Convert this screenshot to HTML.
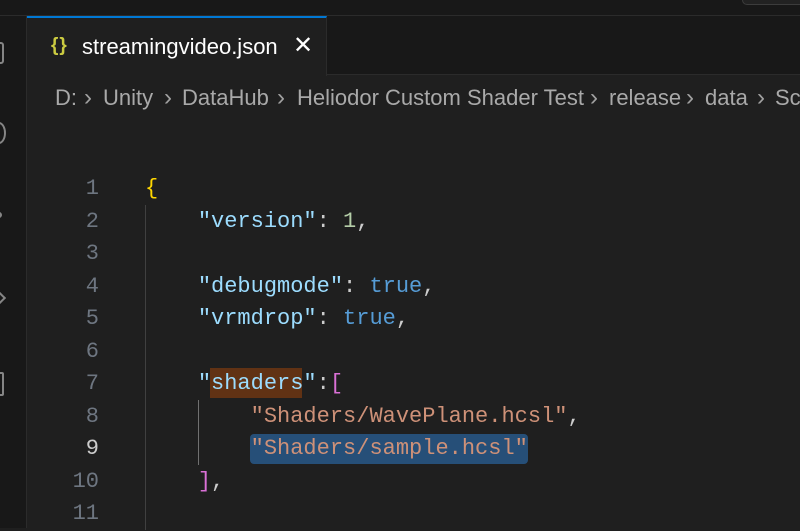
<!DOCTYPE html>
<html><head><style>
*{margin:0;padding:0;box-sizing:border-box}
body{width:800px;height:528px;background:#1f1f1f;overflow:hidden;position:relative;font-family:"Liberation Sans",sans-serif}
.top{position:absolute;left:0;top:0;width:800px;height:16px;background:#181818;border-bottom:1px solid #2b2b2b}
.act{position:absolute;left:0;top:16px;width:27px;height:512px;background:#181818;border-right:1px solid #2b2b2b}
.tabbar{position:absolute;left:27px;top:16px;width:773px;height:59px;background:#181818;border-bottom:1px solid #2b2b2b}
.tab{position:absolute;left:27px;top:16px;width:300px;height:60px;background:#1f1f1f;border-top:2px solid #0078d4;border-right:1px solid #2b2b2b}
.tab .ic{position:absolute;left:24px;top:17px;color:#cbcb41;font-size:19px;font-weight:bold;letter-spacing:1px}
.tab .nm{position:absolute;left:55px;top:16px;color:#fff;font-size:22px}
.tab .x{position:absolute;left:266px;top:13px;color:#fff;font-size:24px}
.bc{position:absolute;top:85px;color:#a9a9a9;font-size:22px;white-space:nowrap}
.ch{position:absolute;top:84px;color:#a0a0a0;font-size:24px}
.code{position:absolute;left:0;top:173px;font-family:"Liberation Mono",monospace;font-size:22px}
.ln{position:absolute;left:40px;width:59px;text-align:right;color:#6e7681;height:32.5px;line-height:32.5px}
.l{position:absolute;left:145px;white-space:pre;height:32.5px;line-height:32.5px;color:#ccc}
.k{color:#9cdcfe}.s{color:#ce9178}.n{color:#b5cea8}.b{color:#569cd6}.y{color:#ffd700}.p{color:#da70d6}
.guide{position:absolute;width:1px;background:#404040}
</style></head><body>
<div class="top"></div>
<div style="position:absolute;left:742px;top:-6px;width:70px;height:11px;border:1px solid #3c3c3c;border-radius:5px;background:#222"></div>
<div class="act"></div>
<div style="position:absolute;left:-6px;top:42px;width:10px;height:22px;border:2px solid #858585;border-radius:3px"></div>
<div style="position:absolute;left:-8px;top:122px;width:14px;height:22px;border:2px solid #858585;border-radius:50%"></div>
<div style="position:absolute;left:-4px;top:212px;width:6px;height:6px;border:2px solid #858585;border-radius:50%"></div>
<div style="position:absolute;left:-6px;top:293px;width:10px;height:10px;border-top:2px solid #858585;border-right:2px solid #858585;transform:rotate(45deg)"></div>
<div style="position:absolute;left:-6px;top:372px;width:10px;height:24px;border:2px solid #858585;border-radius:2px"></div>
<div class="tabbar"></div>
<div class="tab"><span class="ic">{}</span><span class="nm">streamingvideo.json</span><span class="x">✕</span></div>
<span class="bc" style="left:55px">D:</span><span class="ch" style="left:84px">›</span>
<span class="bc" style="left:103px">Unity</span><span class="ch" style="left:164px">›</span>
<span class="bc" style="left:182px">DataHub</span><span class="ch" style="left:277px">›</span>
<span class="bc" style="left:297px">Heliodor Custom Shader Test</span><span class="ch" style="left:590px">›</span>
<span class="bc" style="left:609px">release</span><span class="ch" style="left:686px">›</span>
<span class="bc" style="left:705px">data</span><span class="ch" style="left:757px">›</span>
<span class="bc" style="left:775px">Sce</span>
<div class="guide" style="left:145px;top:205px;height:325px"></div>
<div class="guide" style="left:198px;top:400px;height:65px;background:#707070"></div>
<div style="position:absolute;left:210px;top:368px;width:92px;height:30px;background:#613214"></div>
<div style="position:absolute;left:250px;top:434px;width:278px;height:30px;background:#264f78;border-radius:4px"></div>
<div class="code">
<div class="ln" style="top:0">1</div><div class="l" style="top:0"><span class="y">{</span></div>
<div class="ln" style="top:32.5px">2</div><div class="l" style="top:32.5px">    <span class="k">"version"</span>: <span class="n">1</span>,</div>
<div class="ln" style="top:65px">3</div>
<div class="ln" style="top:97.5px">4</div><div class="l" style="top:97.5px">    <span class="k">"debugmode"</span>: <span class="b">true</span>,</div>
<div class="ln" style="top:130px">5</div><div class="l" style="top:130px">    <span class="k">"vrmdrop"</span>: <span class="b">true</span>,</div>
<div class="ln" style="top:162.5px">6</div>
<div class="ln" style="top:195px">7</div><div class="l" style="top:195px">    <span class="k">"shaders"</span>:<span class="p">[</span></div>
<div class="ln" style="top:227.5px">8</div><div class="l" style="top:227.5px">        <span class="s">"Shaders/WavePlane.hcsl"</span>,</div>
<div class="ln" style="top:260px;color:#ccc">9</div><div class="l" style="top:260px">        <span class="s">"Shaders/sample.hcsl"</span></div>
<div class="ln" style="top:292.5px">10</div><div class="l" style="top:292.5px">    <span class="p">]</span>,</div>
<div class="ln" style="top:325px">11</div>
</div>
</body></html>
